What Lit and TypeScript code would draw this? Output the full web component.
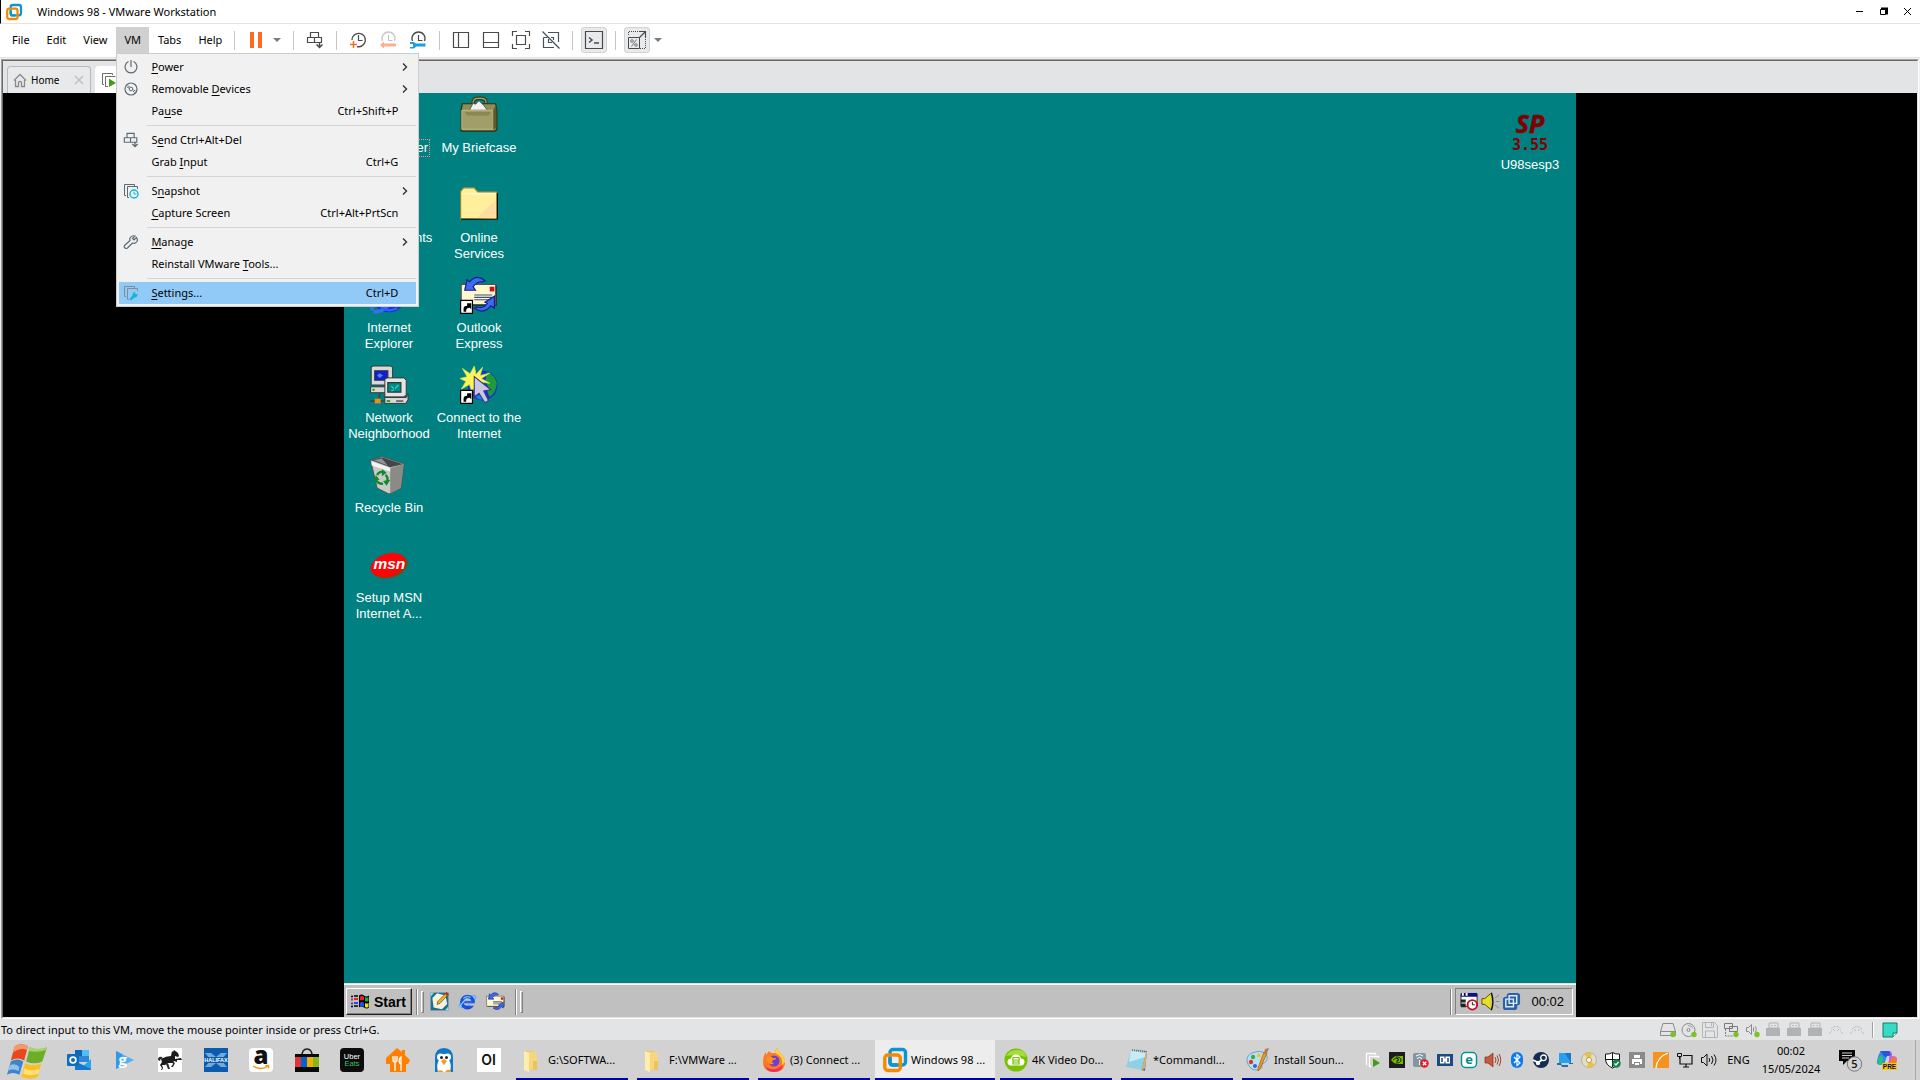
import { LitElement, html, svg, css, nothing, type SVGTemplateResult, type TemplateResult } from "lit";
import { customElement, property } from "lit/decorators.js";
import { classMap } from "lit/directives/class-map.js";

type Art = { box: string; art: SVGTemplateResult };

const S = "#4a4a4c";
const M = "#5b6b76";

const shortcutArrow = svg`<path d="M0.5 20.5h10v11h-10z" fill="#fff" stroke="#000"/>
  <path d="M3 30v-2.500q0-2.500 3-2.500v-2l3.500 0v5l-1.300-1.300q-3.500 0-3 3.300z" fill="#000"/>`;

const usb = svg`<path d="M4 1h9v5H4z" fill="#e3e4e6" stroke="#b2b2b2"/><path d="M6 3h1.500v1H6zM9.500 3H11v1H9.500z" fill="#b2b2b2"/><path d="M1 6h14v8H1z" fill="#b2b2b2"/>`;
const bluetoothOff = svg`<path d="M3 7Q8 2 13 7" fill="none" stroke="#b8b8b8" stroke-dasharray="2 1"/><path d="M5 7l2 2M11 7L9 9M2 10v2M14 10v2M4 9H3M13 9h-1" stroke="#bdbdbd" fill="none"/>`;
const greenDot = svg`<circle cx="13" cy="12.500" r="2.700" fill="#7cc41d"/>`;
const vmwareLogo = svg`<rect x="7" y="1.500" width="15.500" height="15.500" rx="3" fill="none" stroke="#0c95d4" stroke-width="3.400"/>
  <rect x="1.800" y="7" width="15.500" height="15.500" rx="3" fill="none" stroke="#f38b00" stroke-width="3.400"/>
  <path d="M7 10v4.500q0 2.500 2.500 2.500H14" fill="none" stroke="#0c95d4" stroke-width="3.400"/>`;
const ieArt = svg`<ellipse cx="16" cy="16" rx="16" ry="6" transform="rotate(-32 16 16)" fill="none" stroke="#5fb4ff" stroke-width="2.500"/>
  <circle cx="16" cy="17" r="9.500" fill="none" stroke="#1c4fe0" stroke-width="6"/>
  <path d="M18 19h11v4H20z" fill="#c0c0c0"/><path d="M10 15h15v4H10z" fill="#2a62ea"/>
  <path d="M3 27Q4 20 15 11" fill="none" stroke="#8fd0ff" stroke-width="2"/><path d="M9 11Q14 6 21 9" stroke="#79b9ff" stroke-width="2" fill="none"/>`;
const ieDesk = svg`<circle cx="16" cy="16" r="11" fill="none" stroke="#1230d8" stroke-width="7"/>
  <path d="M2 29q-2-6 6-13M3 30q6 1 12-5" fill="none" stroke="#3a6cf8" stroke-width="3"/><path d="M9 26q6 5 14 1" fill="none" stroke="#2e62ff" stroke-width="2"/>`;
const mailSync = svg`<path d="M2 8h29v17H2z" fill="#222"/><path d="M1 7h29v17H1z" fill="#fff8cf" stroke="#555"/>
  <path d="M25 9h4v4h-4z" fill="#d01020"/><path d="M12 16h15M12 18h15M12 20h13" stroke="#39507e" fill="none"/>
  <path d="M21 4Q14-2 8 5L6 3 4 12l9 0-2-3q4-5 8-4z" fill="#3a6cf2" stroke="#1c1a8c"/>
  <path d="M12 27q8 6 14-2l3 2 0-10-8 5 2 1q-3 5-9 3z" fill="#3a6cf2" stroke="#1c1a8c"/>`;
const explorerFolder = svg`<path d="M4 3h10v19H4z" fill="#f0c75a"/><path d="M6 4h9l2 3v14l-9 1z" fill="#f7d680"/><path d="M4 3l5 2v19l-5-2z" fill="#fdeeb0"/><path d="M13 13h4v9h-4z" fill="#edc258"/>`;

const ART: Record<string, Art> = {
  vmware: { box: "0 0 24 24", art: vmwareLogo },
  minimize: { box: "0 0 9 9", art: svg`<path d="M1 4.500h7" stroke="#000" fill="none"/>` },
  restore: { box: "0 0 9 9", art: svg`<path d="M1.500 2.500h5v5h-5z" stroke="#000" fill="none"/><path d="M2 1.500h6v6" stroke="#000" stroke-width="2" fill="none"/>` },
  close: { box: "0 0 9 9", art: svg`<path d="M1 1l7 7M8 1L1 8" stroke="#000" fill="none"/>` },
  pause: { box: "0 0 18 18", art: svg`<path d="M3 1h4v16H3zM11 1h4v16h-4z" fill="#ff6a1f"/>` },
  caret: { box: "0 0 8 8", art: svg`<path d="M0 2h8L4 6z" fill="#7b7b7b"/>` },
  cad: { box: "0 0 18 18", art: svg`<path d="M4.500 1.500h8v5h-8zM1.500 6.500h7v5h-7zM8.500 6.500h7v5h-7z" fill="none" stroke=${S} stroke-width="1.200"/><path d="M13.500 11v6M10.500 13.500l3 3 3-3" fill="none" stroke=${S} stroke-width="1.500"/>` },
  snapTake: { box: "0 0 18 18", art: svg`<path d="M3 9a6.700 6.700 0 1 1 5 6.500" fill="none" stroke=${S} stroke-width="1.300"/><path d="M9.500 4v5.500h4" fill="none" stroke=${S} stroke-width="1.200"/><path d="M4.500 10v7M1 13.500h7" stroke="#ff6a1f" stroke-width="1.500" fill="none"/>` },
  snapRevert: { box: "0 0 18 18", art: svg`<path d="M3.500 10a6.500 6.500 0 1 1 12 0" fill="none" stroke="#c9c9c9" stroke-width="1.300"/><path d="M9.500 4v5.500h4" fill="none" stroke="#c0c0c0"/><path d="M1 14l4-3.500v2h12v3H5v2z" fill="#ffae85"/>` },
  snapManage: { box: "0 0 18 18", art: svg`<path d="M3.500 10a6.500 6.500 0 1 1 12 0" fill="none" stroke=${S} stroke-width="1.300"/><path d="M9.500 4v5.500h4" fill="none" stroke=${S} stroke-width="1.200"/><path d="M1 11h3q2 0 3 1.500h9.500v3H7Q6 17.500 4 17.500H1V16h3v-3H1z" fill="#1f9be0"/>` },
  library: { box: "0 0 18 18", art: svg`<path d="M1.500 1.500h15v15h-15zM6.500 1.500v15" fill="none" stroke=${S} stroke-width="1.200"/>` },
  thumbs: { box: "0 0 18 18", art: svg`<path d="M1.500 1.500h15v15h-15zM1.500 11.500h15" fill="none" stroke=${S} stroke-width="1.200"/>` },
  fullscreen: { box: "0 0 18 18", art: svg`<path d="M5 0.500H0.500V5M13 0.500h4.500V5M5 17.500H0.500V13M13 17.500h4.500V13M4.500 4.500h9v9h-9z" fill="none" stroke=${S} stroke-width="1.200"/>` },
  unity: { box: "0 0 18 18", art: svg`<path d="M6 1.500h10.500V11M1.500 6.500v10H12M6.500 8v3.500H10M9 6.500h2.500V9M5.500 6.500h-4" fill="none" stroke="#44525d" stroke-width="1.200"/><path d="M0.500 0.500l17 17" stroke="#44525d" fill="none" stroke-width="1.200"/>` },
  console: { box: "0 0 18 18", art: svg`<path d="M0.500 0.500h17v17H0.500z" fill="none" stroke=${S} stroke-width="1.200"/><path d="M4 6.500l3 2.500-3 2.500M9 12h5" fill="none" stroke=${S} stroke-width="1.500"/>` },
  stretch: { box: "0 0 18 18", art: svg`<path d="M0.500 6.500h11v11H0.500z" fill="none" stroke=${S}/><path d="M11 7l6-6M12 0.500h5.500V6" fill="none" stroke=${S} stroke-width="1.200"/><path d="M0.500 4V0.500H12M17.500 6v11.500H12" fill="none" stroke=${S} stroke-dasharray="1 1"/><path d="M3.500 15.500l5-7" stroke="#777" fill="none"/><circle cx="4" cy="10" r="1.300" fill="none" stroke="#777"/><circle cx="8" cy="14" r="1.300" fill="none" stroke="#777"/>` },
  power: { box: "0 0 16 16", art: svg`<path d="M5.500 2.500a6 6 0 1 0 5 0M8 1v7" fill="none" stroke=${M} stroke-width="1.200"/>` },
  disc: { box: "0 0 16 16", art: svg`<circle cx="8" cy="8" r="6" fill="none" stroke=${M} stroke-width="1.200"/><circle cx="8" cy="8" r="1.800" fill="none" stroke=${M}/><path d="M4 6l2 1M5 4.500l1.500 1.500M10 10l1.500 1.500M10.500 9l2 1" stroke=${M} fill="none"/>` },
  cadMenu: { box: "0 0 18 18", art: svg`<path d="M4.500 1.500h8v5h-8zM1.500 6.500h7v5h-7zM8.500 6.500h7v5h-7z" fill="none" stroke=${M} stroke-width="1.300"/><path d="M13.500 11v6M10.500 13.500l3 3 3-3" fill="none" stroke=${M} stroke-width="1.500"/>` },
  snapshot: { box: "0 0 16 16", art: svg`<path d="M3 12.500H1.500V1.500h10V3M6 14.500H4.500v-11h10V6" fill="none" stroke=${M}/><circle cx="11" cy="11" r="4" fill="none" stroke="#14b4d8" stroke-width="1.400"/><path d="M11 8.500V11h2.500" fill="none" stroke="#14b4d8"/>` },
  wrench: { box: "0 0 16 16", art: svg`<path d="M13.500 3.500l-2.500 2.500-1.500-1.500L12 2Q8.500 1 7 4q-.500 1.500 0 2.500L1.500 11.500q-1 1.500.500 2.500 1 1 2.500 0L9.500 9q3 1 4.500-1.500 1-2-.500-4z" fill="none" stroke=${M} stroke-width="1.200"/>` },
  settings: { box: "0 0 16 16", art: svg`<path d="M3 11.500H1.500V1.500h10V3M6 14.500H4.500v-11h10V6" fill="none" stroke="#7f8d96"/><path d="M14.500 8.500l-1.500 1-1-1 .500-1.500q-3 0-3 3.500L6.500 14l1.500 1.500 3.500-3q3.500 0 3-4z" fill="#14b4d8"/>` },
  submenu: { box: "0 0 6 8", art: svg`<path d="M1 0.500L4.500 4 1 7.500" fill="none" stroke="#333" stroke-width="1.400"/>` },
  home: { box: "0 0 14 14", art: svg`<path d="M1 7.500L7 1.500l6 6M2.500 7v6.500h3v-4q0-1 1.500-1t1.500 1v4h3V7" fill="none" stroke="#8b8b8b" stroke-width="1.300"/>` },
  tabClose: { box: "0 0 10 10", art: svg`<path d="M1 1l8 8M9 1L1 9" stroke="#c2c2c2" stroke-width="1.600" fill="none"/>` },
  vmOn: { box: "0 0 16 16", art: svg`<path d="M3 12.500H1.500V1.500h10V3M7 14.500H4.500v-10h10" fill="none" stroke="#6d6d6d"/><path d="M8 6.500l7 4.500-7 4z" fill="#3f9e16"/>` },

  briefcase: { box: "0 0 32 32", art: svg`<path d="M11 6q0-4 4-4h3q4 0 4 4" fill="none" stroke="#3a3a1c" stroke-width="3"/><path d="M11 6q0-4 4-4h3q4 0 4 4" fill="none" stroke="#a9a76b"/>
    <path d="M2 6.500h28l1 5v17l-2 1H1v-18z" fill="#8f8c57" stroke="#2e2c10"/><path d="M8 12l3-6 2 1 3-3 4 4 3 4z" fill="#f1f1f1" stroke="#555" stroke-width=".700"/>
    <path d="M1.500 12h26.500v16H1.500z" fill="#a19e69" stroke="#c4c186" stroke-width=".700"/><path d="M28 12l2.500-5v20L28 28.500z" fill="#5d5a30"/><path d="M4 13.500h22l-2 3H6z" fill="#8a8752"/>` },
  folder: { box: "0 0 32 32", art: svg`<path d="M0.500 27.500V4.500l2.500-3h9l3 3.500h16v23z" fill="#ffef9c" stroke="#8d8735"/><path d="M1.500 6.500h29" stroke="#fffbd2" fill="none"/><path d="M14 27L30 12v15z" fill="#ffdca0"/><path d="M31.500 6v22H1" stroke="#000" fill="none" stroke-width=".800"/>` },
  outlook98: { box: "0 0 32 32", art: svg`${mailSync}${shortcutArrow}` },
  ie: { box: "0 0 32 32", art: ieArt },
  ieDesk: { box: "0 0 32 32", art: ieDesk },
  network98: { box: "0 0 32 32", art: svg`<path d="M1 1l2-1h14l2 1v13l-2 2H1z" fill="#d8d8d8" stroke="#333" stroke-width=".800"/><path d="M4 4h11v8H4z" fill="#1020d0" stroke="#333"/><path d="M8 6l3 2-3 2-2-2z" fill="#4b86ff"/>
    <path d="M0.500 17.500h17v5h-17z" fill="#d8d8d8" stroke="#333" stroke-width=".800"/><path d="M2 20h2" stroke="#12a012" stroke-width="1.500" fill="none"/><path d="M8 23v6M0 29.500h12" stroke="#444" fill="none" stroke-width="1.500"/><path d="M4 27.500h5v4H4z" fill="#e8901c"/>
    <path d="M12.500 11l2-1h14l2 2v12l-2 2h-16z" fill="#e4e4e4" stroke="#333" stroke-width=".800"/><path d="M15 14h11v8H15z" fill="#008b85" stroke="#333"/><path d="M18 17l2 2M21 19l3-3M18 21l2-1" stroke="#39d8d0" fill="none"/>
    <path d="M12.500 26.500h18l1.500-3v5l-2 3h-17.500z" fill="#d8d8d8" stroke="#333" stroke-width=".800"/><path d="M14 29.500h3" stroke="#12a012" stroke-width="1.500" fill="none"/><path d="M22 29.500h6" stroke="#333" fill="none"/>` },
  connect98: { box: "0 0 32 32", art: svg`<circle cx="19" cy="16.500" r="12.500" fill="#1236c9"/><path d="M23 5q7 3 8 10-1 8-6 11-3-5-1-8-4-6-1-13z" fill="#1f9a3a"/><path d="M13 26q4 4 10 2l-3-6z" fill="#1a7fe6"/>
    <path d="M12 0l1.500 7 5.500-6-2 7 8-2-7 4.500 7 4-8-1 1 7-5-5-3 7-2-7-7 4 4-6.500-5-2.500 6-1.500-4-7 6.500 4.500z" fill="#fff45a" stroke="#cde84a" stroke-width=".600"/>
    <path d="M12 9l0 17 4-3 5 8 3-2-4-8 6-1z" fill="#c9c6e6" stroke="#3a3a7c" stroke-width=".900"/>${shortcutArrow}` },
  recycle98: { box: "0 0 32 32", art: svg`<path d="M0.500 3.500L10 0.500l18.500 6L26 27l-10 5-10-5z" fill="#c9c9c5" stroke="#4a4a4a" stroke-width=".700"/><path d="M1 3.500l9-2.500 18 6-11 2.500z" fill="#44474a"/><path d="M3 3.500l7-1.500 5 6z" fill="#8e9396"/>
    <path d="M17 10l11.500-3L26 27l-9 4.500z" fill="#8a8a86"/><path d="M1 4.500l16 5.500 0 3-15.500-5z" fill="#f4f4f4"/>
    <path d="M6 16q2-4 6-2M13 16q3 2 1 6M11 23.500q-5 0-6-4" fill="none" stroke="#0f8a2c" stroke-width="2"/><path d="M10 11l4 3-4 3zM17 20l-3 5-3-4zM3 21l2-5 3 4z" fill="#0f8a2c"/>` },
  msn: { box: "0 0 32 32", art: svg`<ellipse cx="17" cy="17" rx="15" ry="9.500" transform="rotate(-18 17 17)" fill="#a03408"/><ellipse cx="15" cy="16" rx="15" ry="9.500" transform="rotate(-20 15 16)" fill="#fb0505"/>
    <text x="3" y="19.500" font-family="'Liberation Sans',sans-serif" font-size="13" font-weight="700" font-style="italic" fill="#fff">msn</text>` },
  computer98: { box: "0 0 32 32", art: svg`<path d="M4 2h22v17H4zM2 21h28v8H2z" fill="#d8d8d8" stroke="#333"/><path d="M7 5h16v11H7z" fill="#008b85"/>` },
  sp: { box: "0 0 38 38", art: svg`<text x="19" y="20" text-anchor="middle" font-family="'Open Sans',sans-serif" font-size="25" font-weight="700" font-style="italic" fill="#800000" stroke="#800000" stroke-width=".600">SP</text>
    <text x="19" y="37" text-anchor="middle" font-family="'DejaVu Sans Mono',monospace" font-size="15" font-weight="700" fill="#800000">3.55</text>` },
  winFlag: { box: "0 0 20 16", art: svg`<path d="M8 2q3-2 5 0t5 0v12q-2 2-5 0t-5 0z" fill="#000"/><path d="M9 3q2-1 4 0v4q-2-1-4 0z" fill="#f02020"/><path d="M14 3.500q2 1 3.500 0v4q-2 1-3.500 0z" fill="#18b030"/><path d="M9 9q2-1 4 0v4q-2-1-4 0z" fill="#2050f0"/><path d="M14 9.500q2 1 3.500 0v4q-2 1-3.500 0z" fill="#f0e020"/>
    <path d="M0 3h2M3 2.500h4" stroke="#000" stroke-width="1.500" fill="none"/><path d="M0 6h2M3 5.500h4" stroke="#f02020" stroke-width="2" fill="none"/><path d="M0 10h2M3 9.500h4" stroke="#2050f0" stroke-width="2" fill="none"/><path d="M0 13h2M3 12.500h4" stroke="#000" stroke-width="1.500" fill="none"/>` },
  showDesk98: { box: "0 0 32 32", art: svg`<path d="M1 1h30v30H1z" fill="#1d6e93"/><path d="M4 10l8-8 14 4 3 14-9 9-14-3z" fill="#f4f1dc"/><path d="M1 1h6L1 8zM25 31h6v-7z" fill="#9fd4e8"/><path d="M28 1l3 3-14 15-5 2 1-5z" fill="#f0b428" stroke="#5a3a08"/><path d="M28 0l4 4-3 3-4-4z" fill="#d42a1e"/>` },
  mail98: { box: "0 0 32 32", art: mailSync },
  scheduler: { box: "0 0 20 20", art: svg`<path d="M1 2h17v13H1z" fill="#fff" stroke="#222"/><path d="M1 1h17v4H1z" fill="#101080"/><path d="M2 1h2v3H2zM6 1h2v3H6z" fill="#fff"/><path d="M1 8h5v3H1zM1 12h5v4H1z" fill="#222"/><circle cx="13" cy="13.500" r="5" fill="#fff" stroke="#c8102a" stroke-width="2"/><path d="M13 10.500v3h2.500" stroke="#111" fill="none"/>` },
  speaker98: { box: "0 0 20 20", art: svg`<path d="M1 7h3l7-6v18l-7-6H1z" fill="#e8e020" stroke="#55500a"/><path d="M11 1q3 9 0 18" fill="#fff" stroke="#111" stroke-width="1.500"/><path d="M15 6l4-3M15.500 10h4M15 14l4 3" stroke="#888" fill="none"/>` },
  vmtools: { box: "0 0 20 20", art: svg`<rect x="5" y="1" width="14" height="13" rx="3" fill="#2b62a6"/><rect x="1" y="5" width="15" height="14" rx="3" fill="#2b62a6"/><path d="M7.500 4h8v8h-8zM4 7.500h8v8H4z" fill="none" stroke="#dce9f6" stroke-width="1.500"/>` },

  hdd: { box: "0 0 16 16", art: svg`<path d="M0.500 9.500l2.500-8h10l2.500 8v4H0.500zM0.500 9.500h15" fill="none" stroke="#8b8b8b"/>${greenDot}` },
  cd: { box: "0 0 16 16", art: svg`<circle cx="7.500" cy="8" r="6.500" fill="none" stroke="#8b8b8b"/><circle cx="7.500" cy="8" r="1.500" fill="none" stroke="#8b8b8b"/><path d="M7 3.500q4 0 5 3" fill="none" stroke="#9b9b9b"/>${greenDot}` },
  floppy: { box: "0 0 16 16", art: svg`<path d="M0.500 0.500h12l3 3v12H0.500zM3.500 0.500v5h8v-5M3.500 15v-6h9v6M9.500 1v3" fill="none" stroke="#b4b4b4"/>` },
  net: { box: "0 0 16 16", art: svg`<path d="M1.500 1.500h8v5h-8zM6.500 4.500h8v5h-8z" fill="#e3e4e6" stroke="#7a7a7a"/><path d="M2.500 7v7h7" fill="none" stroke="#7a7a7a" stroke-dasharray="2 1"/>${greenDot}` },
  sound: { box: "0 0 16 16", art: svg`<path d="M2.500 5.500h2l3-3v10l-3-3h-2zM9.500 5.500v4M11.500 4.500q1.500 3 0 6" fill="none" stroke="#8b8b8b"/>${greenDot}` },
  usb: { box: "0 0 16 16", art: usb },
  btOff: { box: "0 0 16 16", art: bluetoothOff },
  note: { box: "0 0 16 16", art: svg`<path d="M1 1h14v10l-4 4H1z" fill="#35dcc4" stroke="#22766c"/><path d="M11 15v-4h4" fill="#e3e4e6" stroke="#22766c"/>` },

  orb: { box: "0 0 44 38", art: svg`<path d="M8 4q7-4 14 0l-4 15q-7-4-14 0z" fill="#e8481c"/><path d="M8 4q7-4 14 0l-1 4q-8-3-15 3z" fill="#f59a6a"/><path d="M24 5q8 4 18 0l-5 15q-8 4-17 0z" fill="#6dae28"/><path d="M24 5q8 4 18 0l-1 3q-9 3-18 1z" fill="#a5d468"/>
    <path d="M4 20q7-4 13 0l-4 14q-7-4-13 0z" fill="#3d84c8"/><path d="M3 24q6-3 10 2l-1 4q-6-3-11 0z" fill="#8fc2ea"/><path d="M19 22q8 4 17 0l-4 14q-8 4-17 0z" fill="#fdbf20"/><path d="M18 27q6 4 16 1l-1 5q-8 3-16 0z" fill="#ffe07a"/>` },
  outlook: { box: "0 0 24 24", art: svg`<path d="M8 2h14v12H8z" fill="#2a8ad8"/><path d="M8 2h7v6H8z" fill="#1066b5"/><path d="M15 2h7v6h-7z" fill="#50bdf5"/><path d="M8 14l8 4 8-7v10q0 1-1 1H9q-1 0-1-1z" fill="#2aa4ea"/><path d="M8 13l16 8q0 1-1 1H9q-1 0-1-1z" fill="#1578cc"/><rect y="6" width="12" height="12" rx="1" fill="#0f6cbd"/><circle cx="6" cy="12" r="2.900" fill="none" stroke="#fff" stroke-width="1.700"/>` },
  gplay: { box: "0 0 24 24", art: svg`<path d="M4 3l18 9-18 9z" fill="#4fb1f4"/><path d="M4 3l6 3v12l-6 3z" fill="#3597ea"/><text x="6.500" y="16.500" font-family="'Open Sans',sans-serif" font-size="15" font-weight="700" fill="#fff">g</text>` },
  horse: { box: "0 0 24 24", art: svg`<path d="M0 0h24v24H0z" fill="#fff"/><path d="M13 8l1-5 1 1 1-2 4 3 1 3-1 1-3-1 0 3 6-1 1 2-5 0 0 2-3-1-1 2-5 0-3 2-3 0 1 3-1 2H3l1-2-2-3 2-3-1-3q5-3 10-3z" fill="#1c1c1c"/><path d="M0 12q0-4 4-3l1 2q-3-1-3 2zM8 16l2 5h2l-2-6zM14 13l1 3-2 3h2l2-4z" fill="#2b2b2b"/>` },
  halifax: { box: "0 0 24 24", art: svg`<path d="M0 0h24v24H0z" fill="#0b5cae"/><path d="M1 5h6l5 4 5-4h6l-6 7 6 7h-6l-5-4-5 4H1l6-7z" fill="#76a9d8"/><path d="M0 9h24v6H0z" fill="#0b5cae"/><text x="12" y="14" text-anchor="middle" font-family="'Liberation Sans',sans-serif" font-size="5.500" font-weight="700" fill="#fff">HALIFAX</text>` },
  amazon: { box: "0 0 24 24", art: svg`<rect width="24" height="24" rx="4" fill="#fff"/><text x="12" y="16" text-anchor="middle" font-family="'Open Sans',sans-serif" font-size="24" font-weight="800" fill="#111">a</text><path d="M4 18q8 5 15 0M16.500 17.500h3v3" fill="none" stroke="#f79a1c" stroke-width="1.400"/>` },
  store: { box: "0 0 24 24", art: svg`<path d="M7 8q0-7 5-7t5 7" fill="none" stroke="#222" stroke-width="1.500"/><path d="M0 6h24v3H0zM0 19h24v5H0z" fill="#0a0a0a"/><path d="M0 9h6v10H0z" fill="#e53238"/><path d="M6 9h6v10H6z" fill="#0064d2"/><path d="M12 9h6v10h-6z" fill="#f5af02"/><path d="M18 9h6v10h-6z" fill="#86b817"/>` },
  ubereats: { box: "0 0 24 24", art: svg`<rect width="24" height="24" rx="4" fill="#0c0c0c"/><text x="12" y="11" text-anchor="middle" font-family="'Liberation Sans',sans-serif" font-size="7.500" fill="#fff">Uber</text><text x="12" y="18" text-anchor="middle" font-family="'Liberation Sans',sans-serif" font-size="7.500" fill="#3fc060">Eats</text>` },
  justeat: { box: "0 0 24 24", art: svg`<path d="M0 10L11 0l5 4V2h3v5l5 5-2 4-2 0v8H4v-8H0z" fill="#ff8000"/><path d="M7 8v4q0 2 2 2v9M11 8v4q0 2-2 2M9 8v5M15 23V9q-3 2-1 7" fill="none" stroke="#fff" stroke-width="1.300"/>` },
  penguin: { box: "0 0 24 24", art: svg`<path d="M3 24V10Q3 0 12 0t9 10v14z" fill="#1277c9"/><path d="M6 24q-2-8 1-12V8q5-4 10 0v4q3 4 1 12z" fill="#fff"/><circle cx="8.500" cy="9" r="3.500" fill="#fff"/><circle cx="15.500" cy="9" r="3.500" fill="#fff"/><circle cx="9.500" cy="9.500" r="1.500" fill="#222"/><circle cx="14.500" cy="9.500" r="1.500" fill="#222"/><path d="M9 13l3-2 3 2-3 4z" fill="#f79a1c"/><path d="M5 24q2-3 6-1v1zM13 24q3-4 6-1v1z" fill="#f79a1c"/>` },
  oi: { box: "0 0 24 24", art: svg`<path d="M0 0h24v24H0z" fill="#fff"/><text x="11.500" y="17" text-anchor="middle" font-family="Inter,sans-serif" font-size="14" font-weight="600" fill="#111">OI</text>` },

  winFolder: { box: "0 0 24 24", art: explorerFolder },
  firefox: { box: "0 0 24 24", art: svg`<path d="M15 0q1 3 4 6 4 4 4 8 0 10-11 10T1 14q0-6 3-10v3l3-4q1 2 3 2 4 0 3 0 0-3 2-5z" fill="#ff7a22"/><path d="M15 0q1 3 4 6 4 4 4 8l-3 3q1-9-7-12 0-3 2-5z" fill="#ffd33c"/><path d="M1 14q2 6 8 7t12-4q-1 7-9 7T1 14z" fill="#f0305c"/><circle cx="12" cy="13" r="5.500" fill="#6b3ee0"/><path d="M5 9q4-2 6 1l3 0q0 2-3 2-2 2 1 4-5 1-7-3z" fill="#ff8f1c"/>` },
  fourK: { box: "0 0 24 24", art: svg`<circle cx="12" cy="12" r="11.500" fill="#78c000"/><path d="M2 8Q6 1 14 2t8 7q-10-3-20-1z" fill="#a5de3c"/><path d="M6 17.500q-3-1-2.500-4T7 10.500q1-4 5-4t5 4q3 0 3.500 3t-2.500 4z" fill="#fff"/><path d="M9 9.500h6v6.500H9zM9 12h6M9 14h6" fill="none" stroke="#78c000" stroke-width="1.200"/>` },
  notepad: { box: "0 0 24 24", art: svg`<path d="M6 2l16 1-2 20-4-1z" fill="#6b7680"/><path d="M6 2l15 2-4 18L1 19z" fill="#8fd0e4"/><path d="M6 2l15 2-1 5L4 14z" fill="#c6ecf5"/><path d="M17 22l3-2L22 4h-1z" fill="#d9b072"/><path d="M7 2l14 2" stroke="#777" stroke-dasharray="1 1" stroke-width="2" fill="none"/>` },
  paint: { box: "0 0 24 24", art: svg`<path d="M1 14Q0 6 9 4t12 4q1 5-3 7-3 0-2 3 0 4-6 4T1 14z" fill="#b9dff2" stroke="#6aa3c6"/><circle cx="7" cy="9" r="2.200" fill="#3fae4a"/><circle cx="13" cy="7.500" r="2" fill="#f3c321"/><circle cx="5" cy="14" r="2.200" fill="#d93a2c"/><circle cx="9" cy="18" r="2" fill="#3567c9"/><path d="M21 5l-7 16-2 2 0-3 6-16z" fill="#ef9426" stroke="#a35a12" stroke-width=".700"/><path d="M19 1l4-1-2 5-3 1z" fill="#b47b4a"/>` },

  tVm: { box: "0 0 16 16", art: svg`<path d="M2 12.500H1.500V1.500h9V3M6 14.500H4.500v-10h9V6" fill="none" stroke="#fff" stroke-width="1.300"/><path d="M8 6.500l7 4.500-7 4z" fill="#3f9e16"/>` },
  tNvidia: { box: "0 0 16 16", art: svg`<path d="M0 0h16v16H0z" fill="#1d1d1d"/><path d="M2 8q4-5 8-4h4v8H8q-4-1-6-4z" fill="#76b900"/><path d="M4 8q3-3 5-1.500t-1 3q-1-1 1-1.500M7 5q5 0 5 3t-5 3" fill="none" stroke="#1d1d1d"/>` },
  tNoNet: { box: "0 0 16 16", art: svg`<rect x="0" y="1" width="13" height="14" rx="2" fill="#8296a4"/><path d="M3 4q4-3 7 0M4 6.500q2.500-2 5 0M6.500 8v5" fill="none" stroke="#fff"/><circle cx="11.500" cy="11.500" r="4.200" fill="#e01b24"/><path d="M9.800 9.800l3.500 3.500M13.300 9.800l-3.500 3.500" stroke="#fff" stroke-width="1.400" fill="none"/>` },
  tFilm: { box: "0 0 16 16", art: svg`<path d="M0 2h16v12H0z" fill="#1d4a80"/><path d="M3 4.500h10v7H3z" fill="#fff"/><path d="M5 6v4M11 6v4" stroke="#1d4a80" stroke-width="1.500" fill="none"/><path d="M7.500 4v2.500h1V4zM7.500 12V9.500h1V12z" fill="#1d4a80"/>` },
  tEset: { box: "0 0 16 16", art: svg`<rect x=".500" y=".500" width="15" height="15" rx="4" fill="#fff" stroke="#0a9396" stroke-width="1.500"/><text x="8" y="12" text-anchor="middle" font-family="'Open Sans',sans-serif" font-size="13" font-weight="700" fill="#0a8a8f">e</text>` },
  tSpeaker: { box: "0 0 16 16", art: svg`<path d="M0 5h3l5-4v14l-5-4H0z" fill="#c65b40" stroke="#7c2f1e" stroke-width=".700"/><path d="M10 5q2 3 0 6M12 3.500q3 4.500 0 9M14 2q3.500 6 0 12" fill="none" stroke="#a2452e"/>` },
  tBluetooth: { box: "0 0 16 16", art: svg`<rect x="2" y="0" width="12" height="16" rx="6" fill="#0a7cf0"/><path d="M5 5l6 6-3 2.500v-11L11 5l-6 6" fill="none" stroke="#fff" stroke-width="1.200"/>` },
  tSteam: { box: "0 0 16 16", art: svg`<circle cx="8" cy="8" r="8" fill="#152c52"/><circle cx="10.500" cy="5.800" r="2.800" fill="none" stroke="#fff" stroke-width="1.300"/><circle cx="5" cy="11" r="2.200" fill="#fff"/><path d="M0 8l5 2.500L9 8" fill="none" stroke="#fff" stroke-width="1.800"/>` },
  tMonitor: { box: "0 0 16 16", art: svg`<path d="M2 1h12v10H2z" fill="#2aa0ec"/><path d="M8 1h6v10z" fill="#1679d0"/><path d="M0 11h4l1 2h6v2H5l-1-2H0zM12 11h4v1h-4z" fill="#1f6db4"/>` },
  tDisc: { box: "0 0 16 16", art: svg`<circle cx="8" cy="8" r="7.500" fill="#e2dcc8" stroke="#aaa28c" stroke-width=".700"/><path d="M8 8L3 2q5-3 8 0zM8 8l6 5q-4 4-8 2z" fill="#e8c14a"/><circle cx="8" cy="8" r="2.500" fill="#fff" stroke="#c09a2c"/>` },
  tShield: { box: "0 0 16 16", art: svg`<path d="M7.500 0.500q3 2 7 1.500v5q0 6-7 9-7-3-7-9V2q4 .500 7-1.500z" fill="#fff" stroke="#111"/><path d="M7.500 1v14M1 7.500h13" stroke="#111" fill="none"/><circle cx="11.500" cy="11.500" r="4.200" fill="#12824c"/><path d="M9.500 11.500l1.500 1.500 2.500-3" stroke="#fff" fill="none" stroke-width="1.200"/>` },
  tPrinter: { box: "0 0 16 16", art: svg`<path d="M0 0h16v16H0z" fill="#8a8a8a"/><path d="M5 3h6v3H5zM3 7h10v5h-2v-2H5v2H3zM6 11h4v2H6z" fill="#fff"/>` },
  tSwoosh: { box: "0 0 16 16", art: svg`<path d="M0 0h16v16H0z" fill="#f7921e"/><path d="M3 16Q4 5 15 1" fill="none" stroke="#fff" stroke-width="1.300"/>` },
  tNet: { box: "0 0 16 16", art: svg`<path d="M3 4.500V12h12V3.500H6M9 12v3M6 15h6" fill="none" stroke="#111" stroke-width="1.200"/><path d="M0.500 1.500h4v3h-4zM2.500 4v3" fill="none" stroke="#111"/>` },
  tVolume: { box: "0 0 16 16", art: svg`<path d="M0.500 5.500h2l3.500-3.500v12l-3.500-3.500h-2zM8 6q1.500 2 0 4M10.500 4q3 4 0 8M13 2.500q4 5.500 0 11" fill="none" stroke="#111"/>` },
  actions: { box: "0 0 24 24", art: svg`<path d="M1 2h16v11H9l-4 4v-4H1z" fill="#050505"/><path d="M4 5h10M4 7.500h10M4 10h7" stroke="#d2d2d2" fill="none"/><circle cx="16.500" cy="16" r="7.200" fill="#d2d2d2" stroke="#777"/><text x="16.500" y="20" text-anchor="middle" font-family="'Open Sans',sans-serif" font-size="11" font-weight="600" fill="#111">5</text>` },
  copilot: { box: "0 0 20 20", art: svg`<path d="M5 1h7q2 0 3 4l-5 1-3 9H3q-4-1-3-4Q2 1 5 1z" fill="#2b8fe8"/><path d="M1 10Q2 4 6 7l-1 8H3q-3-1-2-5z" fill="#29c07a"/><path d="M12 1q3 0 3 5 5 0 5 3-1 8-5 8h-5q3-6 2-16z" fill="#c65be8"/><path d="M15 7h2q4 1 2 6l-4 3-4-1z" fill="#f2793e"/><path d="M3 1h9l2 4-6 2z" fill="#2a55d4"/><rect x="5" y="13" width="15" height="7" rx="1" fill="#f8c912"/><text x="12.500" y="19" text-anchor="middle" font-family="'Liberation Sans',sans-serif" font-size="6.500" font-weight="700" fill="#111">PRE</text>` },
};

const icon = (name: string, w: number, h = w): TemplateResult =>
  html`<svg viewBox=${ART[name].box} width=${w} height=${h} aria-hidden="true">${ART[name].art}</svg>`;

const reset = css`
  * { box-sizing: border-box; }
  svg { display: block; flex: none; overflow: visible; }
  button {
    font: inherit; color: inherit; background: none; border: 0;
    margin: 0; padding: 0; display: flex; align-items: center; white-space: nowrap;
  }
`;

interface Entry { before?: string; key: string; after?: string; icon?: string; shortcut?: string; sub?: boolean; active?: boolean }

const VM_MENU: Entry[][] = [
  [
    { key: "P", after: "ower", icon: "power", sub: true },
    { before: "Removable ", key: "D", after: "evices", icon: "disc", sub: true },
    { before: "Pa", key: "u", after: "se", shortcut: "Ctrl+Shift+P" },
  ],
  [
    { before: "S", key: "e", after: "nd Ctrl+Alt+Del", icon: "cadMenu" },
    { before: "Grab ", key: "I", after: "nput", shortcut: "Ctrl+G" },
  ],
  [
    { before: "S", key: "n", after: "apshot", icon: "snapshot", sub: true },
    { key: "C", after: "apture Screen", shortcut: "Ctrl+Alt+PrtScn" },
  ],
  [
    { key: "M", after: "anage", icon: "wrench", sub: true },
    { before: "Reinstall VMware ", key: "T", after: "ools..." },
  ],
  [{ key: "S", after: "ettings...", icon: "settings", shortcut: "Ctrl+D", active: true }],
];

@customElement("vm-menu")
class VmMenu extends LitElement {
  static styles = [reset, css`
    :host { display: block; width: 303px; background: #f1f1f1; border: 1px solid #ccc; padding: 2px; }
    .rule { height: 7px; margin-left: 28px; padding-top: 3px; }
    .rule::before { content: ""; display: block; border-top: 1px solid #d4d4d4; }
    .row { width: 100%; height: 22px; padding: 0 18px 0 4px; text-align: left; }
    .row.active { background: #91c9f7; }
    .row.sub { padding-right: 8px; }
    .glyph { width: 28px; flex: none; }
    .label { flex: 1; }
    u { text-underline-offset: 2px; }
  `];
  private row(e: Entry) {
    return html`<button role="menuitem" class=${classMap({ row: true, active: !!e.active, sub: !!e.sub })}>
      <span class="glyph">${e.icon ? icon(e.icon, 16) : nothing}</span>
      <span class="label">${e.before}<u>${e.key}</u>${e.after}</span>
      ${e.shortcut ? html`<span>${e.shortcut}</span>` : nothing}
      ${e.sub ? icon("submenu", 6, 8) : nothing}
    </button>`;
  }
  render() {
    return html`<div role="menu" aria-label="VM">${VM_MENU.map((g, i) => html`
      ${i ? html`<div class="rule" role="separator"></div>` : nothing}
      ${g.map((e) => this.row(e))}`)}</div>`;
  }
}

@customElement("menu-bar")
class MenuBar extends LitElement {
  static styles = [reset, css`
    :host { display: flex; align-items: flex-start; height: 34px; padding: 3px 0 0 4px; background: #fff; border-bottom: 1px solid #e3e3e3; }
    nav { display: flex; gap: 1px; }
    .item { position: relative; }
    .menu { height: 26px; padding: 0 8px; }
    .menu.open { background: #d0d0d0; }
    vm-menu { position: absolute; top: 100%; left: 0; z-index: 10; }
    .tools { display: flex; align-items: center; gap: 4px; }
    .sep { width: 1px; height: 19px; margin: 0 4px; background: #c6c6c6; }
    .tool { width: 26px; height: 26px; justify-content: center; border-radius: 4px; }
    .tool.on { background: #e9eaeb; box-shadow: inset 0 0 0 1px #d2d2d2; }
    .drop { width: 16px; height: 26px; justify-content: center; margin-left: -4px; }
  `];
  private tool(name: string, label: string, on = false) {
    return html`<button class=${classMap({ tool: true, on })} aria-label=${label}>${icon(name, 18)}</button>`;
  }
  render() {
    const sep = html`<span class="sep"></span>`;
    const drop = (label: string) => html`<button class="drop" aria-label=${label}>${icon("caret", 8)}</button>`;
    return html`
      <nav aria-label="Main menu">${["File", "Edit", "View", "VM", "Tabs", "Help"].map((m) => html`
        <div class="item"><button class=${classMap({ menu: true, open: m === "VM" })}>${m}</button>${m === "VM" ? html`<vm-menu></vm-menu>` : nothing}</div>`)}
      </nav>
      <div class="tools">
        ${sep}${this.tool("pause", "Suspend")}${drop("Power options")}
        ${sep}${this.tool("cad", "Send Ctrl+Alt+Del")}
        ${sep}${this.tool("snapTake", "Take snapshot")}${this.tool("snapRevert", "Revert snapshot")}${this.tool("snapManage", "Manage snapshots")}
        ${sep}${this.tool("library", "Library")}${this.tool("thumbs", "Thumbnail bar")}${this.tool("fullscreen", "Full screen")}${this.tool("unity", "Unity")}
        ${sep}${this.tool("console", "Console view", true)}
        ${sep}${this.tool("stretch", "Stretch guest", true)}${drop("Stretch options")}
      </div>`;
  }
}

@customElement("desktop-icon")
class DesktopIcon extends LitElement {
  @property() name = "";
  @property() label = "";
  @property({ type: Boolean }) focused = false;
  static styles = [reset, css`
    :host { display: block; }
    .cell { width: 100%; flex-direction: column; gap: 6px; color: #fff; text-align: center; line-height: 16px; white-space: pre; }
    .focused { outline: 1px dotted #ff9090; }
    .label { padding: 0 1px; }
  `];
  render() {
    return html`<button class="cell">${icon(this.name, 38)}<span class=${classMap({ label: true, focused: this.focused })}>${this.label}</span></button>`;
  }
}

const DESKTOP: [string, string][] = [
  ["computer98", "My Computer"], ["folder", "My Documents"], ["ieDesk", "Internet\nExplorer"],
  ["network98", "Network\nNeighborhood"], ["recycle98", "Recycle Bin"], ["msn", "Setup MSN\nInternet A..."],
  ["briefcase", "My Briefcase"], ["folder", "Online\nServices"], ["outlook98", "Outlook\nExpress"], ["connect98", "Connect to the\nInternet"],
];

@customElement("guest-screen")
class GuestScreen extends LitElement {
  static styles = [reset, css`
    :host { display: flex; flex-direction: column; height: 100%; aspect-ratio: 4 / 3; background: #008080; font: 13px/16px "Liberation Sans", Arial, sans-serif; }
    .desk { flex: 1; display: flex; justify-content: space-between; align-items: flex-start; padding-top: 3px; min-height: 0; }
    .icons { display: grid; grid-auto-flow: column; grid-template-rows: repeat(6, 90px); grid-auto-columns: 90px; }
    .icons desktop-icon:nth-child(7) { grid-column: 2; }
    .lone { width: 92px; margin-top: 17px; }
    .bar { display: flex; align-items: center; height: 34px; padding: 2px 3px 0 2px; background: #c0c0c0; border-top: 1px solid #dfdfdf; box-shadow: inset 0 1px #fff; color: #000; }
    .start { height: 27px; width: 66px; gap: 3px; padding: 0 4px; font-size: 14px; font-weight: 700; border: 1px solid; border-color: #fff #222 #222 #fff; box-shadow: inset -1px -1px #808080; }
    .sep { width: 2px; height: 26px; margin-left: 4px; border-left: 1px solid #808080; border-right: 1px solid #fff; }
    .grip { width: 3px; height: 22px; margin-left: 3px; border: 1px solid; border-color: #fff #808080 #808080 #fff; }
    .quick { display: flex; gap: 9px; padding: 0 6px; }
    .tray { display: flex; align-items: center; gap: 2px; height: 27px; margin-left: 3px; padding: 0 8px 0 4px; border: 1px solid; border-color: #808080 #fff #fff #808080; }
    .right { display: flex; align-items: center; margin-left: auto; }
    .time { margin-left: 8px; }
  `];
  render() {
    return html`
      <div class="desk">
        <div class="icons">${DESKTOP.map(([n, l], i) => html`<desktop-icon .name=${n} .label=${l} .focused=${i === 0}></desktop-icon>`)}</div>
        <desktop-icon class="lone" .name=${"sp"} .label=${"U98sesp3"}></desktop-icon>
      </div>
      <div class="bar">
        <button class="start">${icon("winFlag", 20, 17)}Start</button>
        <span class="sep"></span><span class="grip"></span>
        <div class="quick">
          <button aria-label="Show Desktop">${icon("showDesk98", 19)}</button>
          <button aria-label="Internet Explorer">${icon("ie", 19)}</button>
          <button aria-label="Outlook Express">${icon("mail98", 19)}</button>
        </div>
        <span class="sep"></span><span class="grip"></span>
        <div class="right"><span class="sep"></span>
          <div class="tray">${icon("scheduler", 19)}${icon("speaker98", 19)}${icon("vmtools", 19)}<span class="time">00:02</span></div>
        </div>
      </div>`;
  }
}

@customElement("host-taskbar")
class HostTaskbar extends LitElement {
  static styles = [reset, css`
    :host { display: flex; height: 40px; background: #d2d2d2; }
    button { height: 100%; }
    .orb { width: 56px; padding-left: 7px; }
    .pins { display: flex; width: 456px; }
    .pin { flex: 1; justify-content: center; }
    .tasks { display: flex; gap: 1px; }
    .task { position: relative; width: 120px; padding-left: 8px; gap: 4px; }
    .task::after { content: ""; position: absolute; left: 4px; right: 4px; bottom: 0; height: 2px; background: #0000a8; }
    .task.active { background: #ededed; }
    .task.active::after { left: 0; right: 0; }
    .tray { display: flex; margin-left: auto; }
    .tray button { justify-content: center; }
    .status { width: 24px; }
    .lang { width: 35px; }
    .clock { width: 70px; flex-direction: column; line-height: 18px; }
    .tray .actions { width: 48px; }
    .copilot { width: 26px; }
    .peek { width: 5px; margin-left: 15px; border-left: 1px solid #a8a8a8; }
  `];
  render() {
    const pins: [string, string][] = [["outlook", "Outlook"], ["gplay", "Google Play Games"], ["horse", "Lloyds Bank"], ["halifax", "Halifax"], ["amazon", "Amazon"], ["store", "eBay"], ["ubereats", "Uber Eats"], ["justeat", "Just Eat"], ["penguin", "Penguin"], ["oi", "OI"]];
    const tasks: [string, string][] = [["winFolder", "G:\\SOFTWA..."], ["winFolder", "F:\\VMWare ..."], ["firefox", "(3) Connect ..."], ["vmware", "Windows 98 ..."], ["fourK", "4K Video Do..."], ["notepad", "*Commandl..."], ["paint", "Install Soun..."]];
    const tray: [string, string][] = [["tVm", "VMware"], ["tNvidia", "NVIDIA"], ["tNoNet", "Wireless"], ["tFilm", "Display"], ["tEset", "ESET"], ["tSpeaker", "Audio"], ["tBluetooth", "Bluetooth"], ["tSteam", "Steam"], ["tMonitor", "Monitor"], ["tDisc", "Disc"], ["tShield", "Security"], ["tPrinter", "Printer"], ["tSwoosh", "Updater"], ["tNet", "Network"], ["tVolume", "Volume"]];
    return html`
      <button class="orb" aria-label="Start">${icon("orb", 42, 37)}</button>
      <div class="pins">${pins.map(([n, l]) => html`<button class="pin" aria-label=${l}>${icon(n, 24)}</button>`)}</div>
      <div class="tasks">${tasks.map(([n, l]) => html`<button class=${classMap({ task: true, active: n === "vmware" })}>${icon(n, 24)}<span>${l}</span></button>`)}</div>
      <div class="tray">
        ${tray.map(([n, l]) => html`<button class="status" aria-label=${l}>${icon(n, 16)}</button>`)}
        <button class="lang">ENG</button>
        <button class="clock"><span>00:02</span><span>15/05/2024</span></button>
        <button class="actions" aria-label="Notifications">${icon("actions", 24)}</button>
        <button class="copilot" aria-label="Copilot">${icon("copilot", 20)}</button>
        <button class="peek" aria-label="Show desktop"></button>
      </div>`;
  }
}

@customElement("app-root")
class AppRoot extends LitElement {
  static styles = [reset, css`
    :host { display: flex; flex-direction: column; height: 100vh; overflow: hidden; background: #f0f0f0; color: #000; font: 11px/16px "Noto Sans", "Segoe UI", sans-serif; }
    .title { display: flex; align-items: center; height: 24px; padding: 0 1px 0 5px; background: #fff; border-bottom: 1px solid #e3e3e3; border-left: 1px solid #000; }
    .title h1 { flex: 1; margin: 0 0 0 15px; font: inherit; }
    .win { width: 24px; height: 20px; justify-content: center; }
    .frame { flex: 1; min-height: 0; display: flex; margin: 1px 1px 0; border: 1px solid; border-color: #a0a0a0 #fff #fff #a0a0a0; }
    .inner { flex: 1; min-width: 0; display: flex; flex-direction: column; border: 1px solid; border-color: #696969 #e3e3e3 #e3e3e3 #696969; background: #e3e4e6; }
    .tabs { display: flex; align-items: flex-end; gap: 4px; height: 32px; padding-left: 4px; }
    .tab { display: flex; align-items: center; height: 27px; padding: 0 6px 0 5px; border: 1px solid #b9b9b9; border-bottom: 0; border-radius: 4px 4px 0 0; background: #e8e9eb; }
    .tab.home { width: 84px; gap: 4px; font-size: 10px; }
    .tab.home .x { margin-left: auto; }
    .tab.active { width: 130px; background: #fff; border-color: #fff; }
    .screen { flex: 1; min-height: 0; display: flex; justify-content: center; background: #000; }
    .status { display: flex; align-items: center; height: 21px; padding: 1px 22px 0 1px; background: #e3e4e6; }
    .status .msg { flex: 1; }
    .devices { display: flex; gap: 5px; }
    .sep { width: 2px; height: 16px; margin: 0 8px 0 7px; background: #fff; border-left: 1px solid #a0a0a0; }
  `];
  render() {
    return html`
      <header class="title">
        ${icon("vmware", 16)}<h1>Windows 98 - VMware Workstation</h1>
        <button class="win" aria-label="Minimize">${icon("minimize", 9)}</button>
        <button class="win" aria-label="Restore">${icon("restore", 9)}</button>
        <button class="win" aria-label="Close">${icon("close", 9)}</button>
      </header>
      <menu-bar></menu-bar>
      <main class="frame"><div class="inner">
        <div class="tabs">
          <div class="tab home">${icon("home", 14)}<span>Home</span><button class="x" aria-label="Close Home">${icon("tabClose", 10)}</button></div>
          <div class="tab active">${icon("vmOn", 16)}</div>
        </div>
        <div class="screen"><guest-screen></guest-screen></div>
      </div></main>
      <footer class="status">
        <span class="msg">To direct input to this VM, move the mouse pointer inside or press Ctrl+G.</span>
        <div class="devices">
          ${["hdd", "cd", "floppy", "net", "sound", "usb", "usb", "usb", "btOff", "btOff"].map((n) => icon(n, 16))}
        </div>
        <span class="sep"></span>${icon("note", 16)}
      </footer>
      <host-taskbar></host-taskbar>`;
  }
}
